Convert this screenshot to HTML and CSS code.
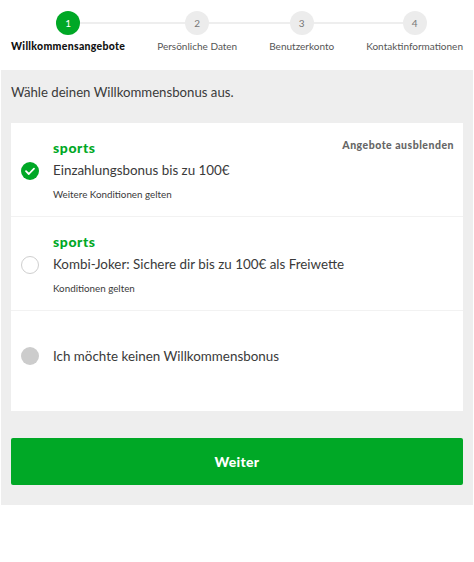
FILE: index.html
```html
<!DOCTYPE html>
<html lang="de">
<head>
<meta charset="utf-8">
<link rel="stylesheet" href="styles.css">
</head>
<body>
<div class="stepper">
  <div class="line"></div>
  <div class="step active"><span class="dot">1</span><span class="label">Willkommensangebote</span></div>
  <div class="step"><span class="dot">2</span><span class="label">Persönliche Daten</span></div>
  <div class="step"><span class="dot">3</span><span class="label">Benutzerkonto</span></div>
  <div class="step"><span class="dot">4</span><span class="label">Kontaktinformationen</span></div>
</div>
<div class="panel">
  <p class="intro">Wähle deinen Willkommensbonus aus.</p>
  <div class="card">
    <div class="row first">
      <a class="hide">Angebote ausblenden</a>
      <div class="radio checked">
        <svg viewBox="0 0 18 18" width="18" height="18"><circle cx="9" cy="9" r="9" fill="#00a826"/><path d="M5 9.2 L7.8 12 L13 6.6" fill="none" stroke="#fff" stroke-width="1.8" stroke-linecap="round" stroke-linejoin="round"/></svg>
      </div>
      <div class="content">
        <div class="brand">sports</div>
        <div class="title">Einzahlungsbonus bis zu 100€</div>
        <div class="small">Weitere Konditionen gelten</div>
      </div>
    </div>
    <div class="row">
      <div class="radio empty"></div>
      <div class="content">
        <div class="brand">sports</div>
        <div class="title">Kombi-Joker: Sichere dir bis zu 100€ als Freiwette</div>
        <div class="small">Konditionen gelten</div>
      </div>
    </div>
    <div class="row last">
      <div class="radio none"></div>
      <div class="content">
        <div class="title nob">Ich möchte keinen Willkommensbonus</div>
      </div>
    </div>
  </div>
  <button class="next">Weiter</button>
</div>
</body>
</html>
```
FILE: styles.css
```css
* { box-sizing: border-box; }
body {
  margin: 0;
  font-family: Lato, "Open Sans", sans-serif;
  color: #3a3a3a;
  background: #fff;
}
.stepper {
  position: relative;
  height: 70px;
  display: flex;
  justify-content: space-between;
  padding: 11px 11px 0 11px;
}
.stepper .line {
  position: absolute;
  top: 22px;
  left: 69px;
  right: 59px;
  height: 2px;
  background: #eeeeee;
}
.step {
  position: relative;
  display: flex;
  flex-direction: column;
  align-items: center;
}
.dot {
  width: 24px;
  height: 24px;
  border-radius: 50%;
  background: #ececec;
  color: #777;
  font-size: 10px;
  display: flex;
  align-items: center;
  justify-content: center;
}
.step.active .dot {
  background: #00a826;
  color: #fff;
}
.label {
  margin-top: 5px;
  font-size: 10px;
  line-height: 12px;
  color: #555;
  white-space: nowrap;
}
.step.active .label {
  color: #111;
  font-weight: 900;
  font-size: 10.5px;
  letter-spacing: 0.3px;
}
.panel {
  margin: 0 1px;
  background: #eeeeee;
  padding: 12px 10px 20px 10px;
}
.intro {
  margin: 0;
  font-size: 13.2px;
  line-height: 20px;
  color: #3a3a3a;
}
.card {
  margin-top: 21px;
  background: #fff;
}
.row {
  position: relative;
  display: flex;
  align-items: center;
  padding: 17px 10px 15px 10px;
  border-bottom: 1px solid #f2f2f2;
}
.row.last {
  border-bottom: 0;
  padding: 35px 10px 45px 10px;
}
.radio {
  width: 18px;
  height: 18px;
  flex: none;
  margin-right: 14px;
  border-radius: 50%;
}
.radio svg { display: block; }
.radio.empty {
  border: 1px solid #cfcfcf;
  background: #fff;
}
.radio.none {
  background: #cccccc;
}
.brand {
  color: #00a826;
  font-weight: 900;
  font-size: 14px;
  letter-spacing: 0.6px;
  line-height: 16px;
}
.title {
  margin-top: 4px;
  font-size: 13.4px;
  line-height: 20px;
  color: #3a3a3a;
}
.title.nob { margin-top: 0; }
.small {
  margin-top: 7px;
  font-size: 9.8px;
  line-height: 14px;
  color: #3a3a3a;
}
.hide {
  position: absolute;
  top: 16px;
  right: 9px;
  font-size: 10.5px;
  letter-spacing: 0.5px;
  line-height: 12px;
  font-weight: 900;
  color: #666;
}
.next {
  display: block;
  width: 100%;
  margin-top: 27px;
  height: 47px;
  border: 0;
  border-radius: 2px;
  background: #00a826;
  color: #fff;
  font-family: Lato, sans-serif;
  font-weight: 900;
  font-size: 14px;
  letter-spacing: 0.3px;
}
```
